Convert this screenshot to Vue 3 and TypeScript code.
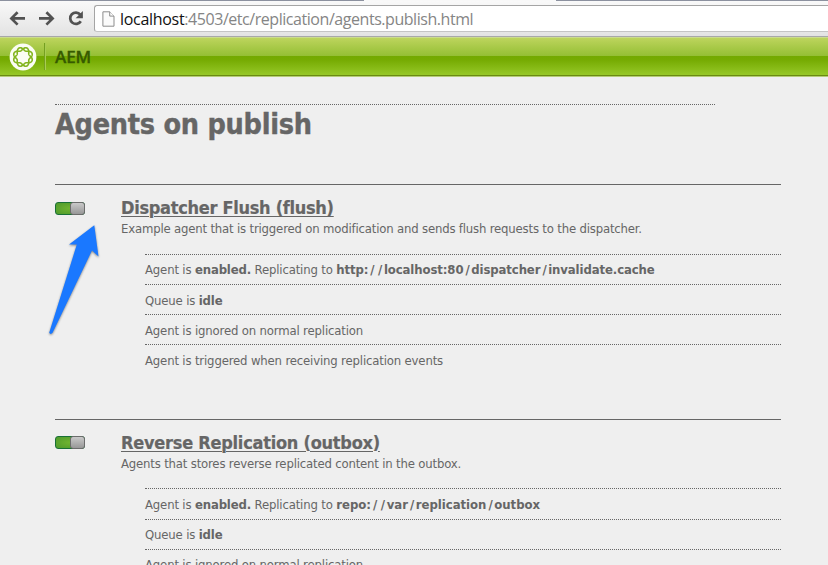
<script setup lang="ts">
interface Agent {
  title: string
  kind: string
  description: string
  target: string
  notes: string[]
}

const agents: Agent[] = [
  {
    title: 'Dispatcher Flush (flush)',
    kind: 'flush',
    description: 'Example agent that is triggered on modification and sends flush requests to the dispatcher.',
    target: 'http://localhost:80/dispatcher/invalidate.cache',
    notes: ['Agent is ignored on normal replication', 'Agent is triggered when receiving replication events'],
  },
  {
    title: 'Reverse Replication (outbox)',
    kind: 'outbox',
    description: 'Agents that stores reverse replicated content in the outbox.',
    target: 'repo://var/replication/outbox',
    notes: ['Agent is ignored on normal replication'],
  },
]

// Splits an address so its slashes can be spaced separately
const parts = (target: string): string[] => target.split(/(\/)/).filter(Boolean)

// The brand mark is two opposed four-lobed waves woven round a ring
function wave(sign: number): string {
  const points: string[] = []
  for (let i = 0; i < 96; i++) {
    const a = (i / 96) * Math.PI * 2
    const r = 8.1 + sign * 1.7 * Math.cos(4 * a + Math.PI / 2)
    points.push(`${(14 + r * Math.cos(a)).toFixed(2)} ${(14 + r * Math.sin(a)).toFixed(2)}`)
  }
  return `M${points.join('L')}Z`
}
</script>

<template>
  <div class="window">
    <div class="tabs"><i class="strip left"></i><i class="active"></i><i class="strip right"></i></div>
    <div class="toolbar">
      <svg class="nav" width="94" height="31" viewBox="0 0 94 31" fill="none" stroke="#525252" stroke-width="2.7">
        <path d="M11.5 13.4H25M17.6 7.2L11.4 13.4L17.6 19.6" />
        <path d="M39 13.4H52.5M46.4 7.2L52.6 13.4L46.4 19.6" />
        <path d="M80.3 9.6A5.7 5.7 0 1 0 80.8 16.2" />
        <path d="M82.9 6V13.2H75.6Z" fill="#525252" stroke="none" />
      </svg>
      <div class="omnibox">
        <svg class="page" width="13" height="16" viewBox="0 0 13 16" fill="#fbfbfb" stroke="#8d8d8d">
          <path d="M.9.8H7.7L12 5.1V15.2H.9Z" />
          <path d="M7.7.8V5.1H12" />
        </svg>
        <span class="url"><b>localhost</b>:4503/etc/replication/agents.publish.html</span>
      </div>
    </div>

    <header class="brand">
      <svg class="logo" width="28" height="28" viewBox="0 0 28 28">
        <circle cx="14" cy="14" r="13.4" fill="#fbfdf4" />
        <g fill="none" stroke="#83b51f" stroke-width="1.6">
          <path :d="wave(1)" />
          <path :d="wave(-1)" />
        </g>
      </svg>
      <span class="divider"></span>
      <span class="product">AEM</span>
    </header>

    <main class="content">
      <h1>Agents on publish</h1>
      <section v-for="agent in agents" :key="agent.title" class="agent" :class="agent.kind">
        <div class="switch"><span class="knob"></span></div>
        <div class="body">
          <div class="head">
            <h2><a>{{ agent.title }}</a></h2>
            <p>{{ agent.description }}</p>
          </div>
          <ul>
            <li>Agent is <strong>enabled.</strong> Replicating to <strong class="target"><span v-for="(part, i) in parts(agent.target)" :key="i" :class="{ slash: part === '/' }">{{ part }}</span></strong></li>
            <li>Queue is <strong>idle</strong></li>
            <li v-for="note in agent.notes" :key="note">{{ note }}</li>
          </ul>
        </div>
      </section>
    </main>

    <svg class="pointer" width="64" height="122" viewBox="0 0 64 122">
      <path d="M54.3 5.2L58.5 36.4L52 30.5L12.6 112.8Q10.5 115 9.2 112.8L36.8 24.6L29 24.4Z" fill="#1a78ff" />
    </svg>
  </div>
</template>

<style>
body {
  background: #efefef;
  overflow: hidden;
}
</style>

<style scoped>
.window {
  position: relative;
  width: 828px;
  height: 565px;
  overflow: hidden;
  background: #efefef;
  color: #666;
  font-family: 'DejaVu Sans Condensed', 'DejaVu Sans', sans-serif;
  font-size: 13px;
}
.tabs {
  display: flex;
  height: 1px;
}
.strip {
  background: #8c919f;
}
.left {
  width: 364px;
}
.active {
  width: 192px;
  background: #f8f8f8;
}
.right {
  flex: 1;
}
.toolbar {
  display: flex;
  box-sizing: border-box;
  height: 36px;
  padding-top: 4px;
  background: linear-gradient(#f9f9f9, #e3e3e3);
  border-bottom: 1px solid #a8a8a8;
}
.nav {
  flex: none;
}
.omnibox {
  display: flex;
  align-items: center;
  box-sizing: border-box;
  width: 744px;
  height: 27px;
  padding-left: 7px;
  background: #fff;
  border: 1px solid #a5a5a5;
  border-right: 0;
  border-bottom-color: #c4c4c4;
  border-radius: 3px 0 0 3px;
}
.page {
  margin-right: 5px;
}
.url {
  font-family: 'Open Sans', sans-serif;
  font-size: 16px;
  line-height: 24px;
  white-space: nowrap;
  letter-spacing: -0.45px;
  color: #858585;
}
.url b {
  font-weight: 400;
  letter-spacing: -0.3px;
  color: #111;
}
.brand {
  display: flex;
  box-sizing: border-box;
  height: 40px;
  padding: 5px 0 0 9px;
  border-top: 1px solid #cbdc8c;
  border-bottom: 1px solid #b4cd77;
  background: linear-gradient(#bdd45d 0, #94bf34 18px, #73a900 18px, #76ab02 22px, #96c828 37px, #6a8a12 37px);
}
.logo {
  flex: none;
}
.divider {
  width: 1px;
  height: 27px;
  margin-left: 7px;
  background: #759f20;
  border-right: 1px solid #a9cc54;
}
.product {
  margin-left: 9px;
  font: 600 17px/28px 'Open Sans', sans-serif;
  color: #365a00;
  letter-spacing: -0.1px;
  -webkit-text-stroke: 0.3px #365a00;
}
.content {
  padding: 27px 47px 0 55px;
}
h1 {
  width: 660px;
  height: 79px;
  margin: 0;
  border-top: 1px dotted #666;
  font-size: 28.5px;
  line-height: 39px;
  letter-spacing: -0.26px;
  -webkit-text-stroke: 0.4px #666;
}
.agent {
  display: flex;
  box-sizing: border-box;
  height: 234.6px;
  border-top: 1px solid #666;
}
.switch {
  box-sizing: border-box;
  flex: none;
  width: 30px;
  height: 13px;
  margin: 16.8px 36px 0 0;
  border: 1px solid #197037;
  border-radius: 3px;
  background: radial-gradient(#70b431, #4e9a2c);
}
.knob {
  display: block;
  box-sizing: border-box;
  width: 15px;
  height: 13px;
  margin: -1px 0 0 14px;
  border: 1px solid #6c6c6c;
  border-radius: 3px;
  background: linear-gradient(#c9c9c9, #989898);
}
.body {
  flex: 1;
}
.head {
  box-sizing: border-box;
  height: 68.8px;
  padding-top: 11px;
}
h2 {
  margin: 0;
  font-size: 18px;
  line-height: 24px;
  white-space: nowrap;
  letter-spacing: -0.29px;
  -webkit-text-stroke: 0.2px #666;
}
.outbox h2 {
  letter-spacing: -0.25px;
}
h2 a {
  text-decoration: underline;
  text-decoration-thickness: 1px;
  text-underline-offset: 2px;
}
p {
  margin: 0;
  line-height: 18px;
  white-space: nowrap;
  letter-spacing: -0.18px;
}
ul {
  margin: 0 0 0 24px;
  padding: 0;
  list-style: none;
}
li {
  box-sizing: border-box;
  height: 30.2px;
  padding-top: 0.6px;
  border-top: 1px dotted #666;
  line-height: 29px;
  white-space: nowrap;
  letter-spacing: -0.16px;
}
.target {
  letter-spacing: -0.1px;
}
.outbox .target {
  letter-spacing: -0.02px;
}
.slash {
  padding: 0 1.6px 0 2px;
}
.pointer {
  position: absolute;
  left: 40px;
  top: 220px;
  filter: drop-shadow(0 1px 1px rgba(0, 0, 0, 0.45));
}
</style>
